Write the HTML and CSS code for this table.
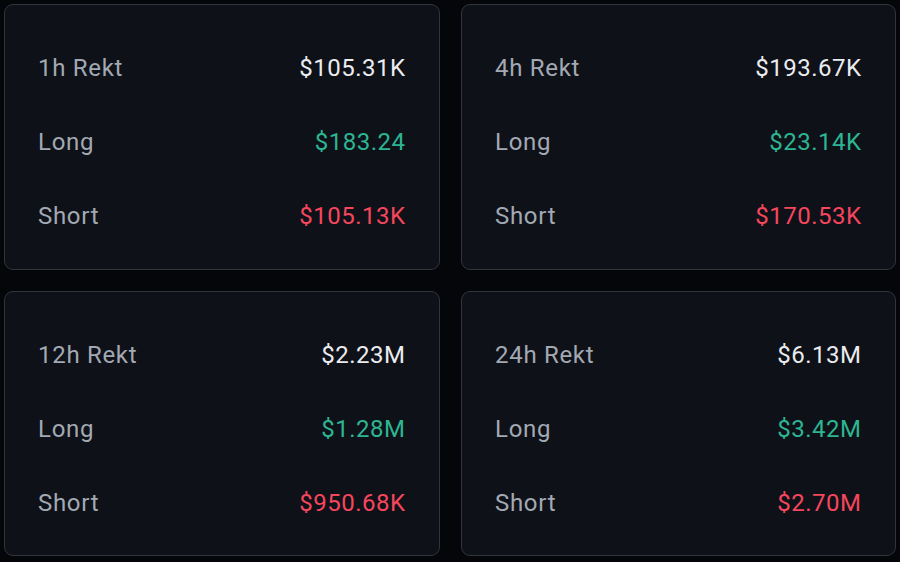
FILE: index.html
```html
<!DOCTYPE html>
<html>
<head>
<meta charset="utf-8">
<link rel="stylesheet" href="styles.css">
</head>
<body>
<div class="grid">
  <div class="card">
    <div class="row"><span class="label">1h Rekt</span><span class="val total">$105.31K</span></div>
    <div class="row"><span class="label">Long</span><span class="val long">$183.24</span></div>
    <div class="row"><span class="label">Short</span><span class="val short">$105.13K</span></div>
  </div>
  <div class="card">
    <div class="row"><span class="label">4h Rekt</span><span class="val total">$193.67K</span></div>
    <div class="row"><span class="label">Long</span><span class="val long">$23.14K</span></div>
    <div class="row"><span class="label">Short</span><span class="val short">$170.53K</span></div>
  </div>
  <div class="card">
    <div class="row"><span class="label">12h Rekt</span><span class="val total">$2.23M</span></div>
    <div class="row"><span class="label">Long</span><span class="val long">$1.28M</span></div>
    <div class="row"><span class="label">Short</span><span class="val short">$950.68K</span></div>
  </div>
  <div class="card">
    <div class="row"><span class="label">24h Rekt</span><span class="val total">$6.13M</span></div>
    <div class="row"><span class="label">Long</span><span class="val long">$3.42M</span></div>
    <div class="row"><span class="label">Short</span><span class="val short">$2.70M</span></div>
  </div>
</div>
</body>
</html>
```
FILE: styles.css
```css
html, body {
  margin: 0;
  padding: 0;
  background: #050609;
  width: 900px;
  height: 562px;
  overflow: hidden;
}
body {
  font-family: Roboto, "Liberation Sans", sans-serif;
}
.grid {
  display: grid;
  grid-template-columns: 436px 435px;
  grid-template-rows: 266px 265px;
  column-gap: 21px;
  row-gap: 21px;
  padding: 4px;
}
.card {
  box-sizing: border-box;
  background: #0e1118;
  border: 1px solid #30343c;
  border-radius: 9px;
  padding: 47px 34px 0 33px;
  display: flex;
  flex-direction: column;
  gap: 42px;
}
.row {
  display: flex;
  justify-content: space-between;
  align-items: center;
  height: 32px;
  font-size: 24px;
  line-height: 32px;
}
.label {
  color: #a3a9b3;
  letter-spacing: 0.7px;
}
.val {
  font-weight: 400;
  letter-spacing: 0.5px;
  margin-right: -0.5px;
}
.total { color: #eaecef; }
.long { color: #2db592; }
.short { color: #f6465d; }
```
